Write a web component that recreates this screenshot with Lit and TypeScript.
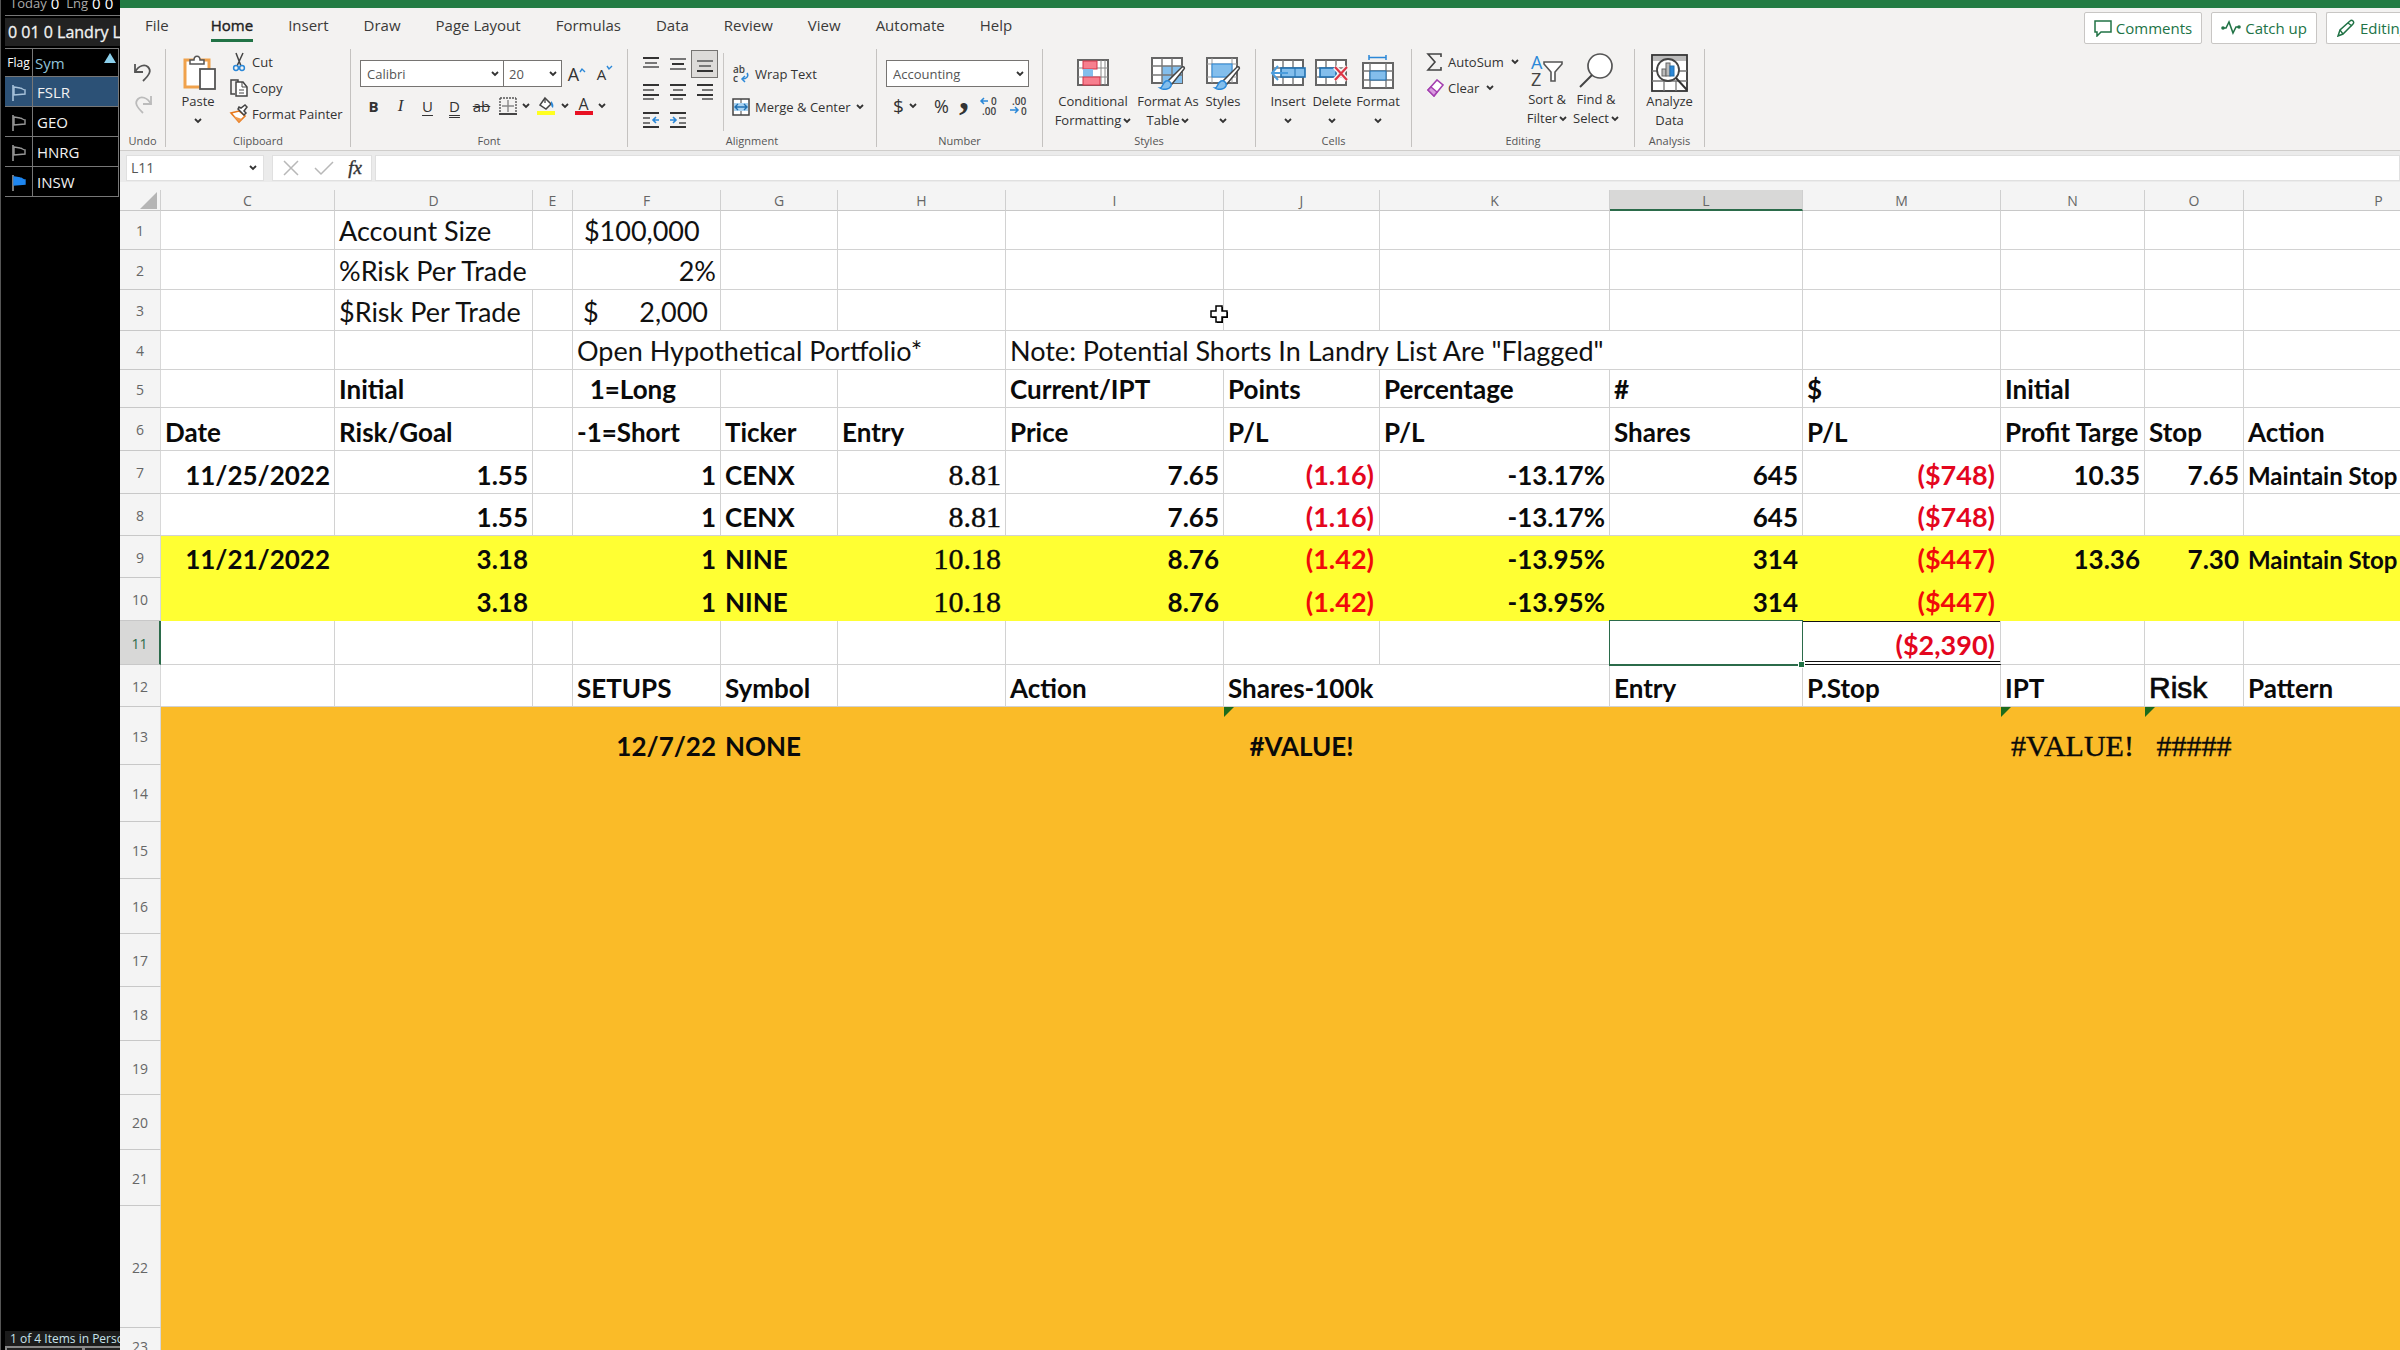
import { LitElement, html, css, svg, nothing } from "lit";
import { customElement } from "lit/decorators.js";
import { classMap } from "lit/directives/class-map.js";

const BLUE = "#2b88d8";
const LIGHT = "#83beec";

const svgIcon = (w: number, h: number, body: unknown) =>
  html`<svg width=${w} height=${h} viewBox="0 0 ${w} ${h}" fill="none" aria-hidden="true">${body}</svg>`;

const chevron = html`<svg class="chev" width="8" height="6" viewBox="0 0 8 6" fill="none" aria-hidden="true"><path d="M1 1l3 3 3-3" stroke="#333" stroke-width="1.8" /></svg>`;

const lines = (list: [number, number, number, string][]) =>
  list.map(([x1, x2, y, c]) => svg`<path d="M${x1} ${y}H${x2}" stroke=${c} stroke-width="2"/>`);

const D = "#333";
const G = "#777";
const gridPath = svg`<rect x="1" y="1" width="30" height="25" fill="#fff" stroke="#666" stroke-width="2"/>`;
const brush = svg`<path d="M31 10c2-1 3 1 2 2L21 27l-4-3z" fill="#fff" stroke="#444" stroke-width="1.5"/><path d="M9 31c3 0 2-5 6-7 3-1 6 2 5 5-2 4-8 4-11 2z" fill="${LIGHT}" stroke="${BLUE}" stroke-width="1.5"/>`;

const icons = {
  undo: svgIcon(20, 20, svg`<path d="M2 1v8h8" stroke="#555" stroke-width="1.8"/><path d="M2 9C6 2 12 1 15 4c4 4 1 8-5 14" stroke="#555" stroke-width="1.8"/>`),
  redo: svgIcon(20, 20, svg`<path d="M18 1v8h-8" stroke="#bbb" stroke-width="1.8"/><path d="M18 9C14 2 8 1 5 4c-4 4-1 8 5 14" stroke="#bbb" stroke-width="1.8"/>`),
  paste: svgIcon(38, 36, svg`<g transform="translate(4 0)"><rect x="2" y="5" width="24" height="27" fill="#fff" stroke="#f0a24c" stroke-width="3"/><path d="M7 9V5h4c0-5 6-5 6 0h4v4z" fill="#fff" stroke="#555" stroke-width="1.5"/><rect x="17" y="14" width="15" height="20" fill="#fff" stroke="#555" stroke-width="1.8"/></g>`),
  cut: svgIcon(18, 20, svg`<path d="M6 1l5 13M13 1L7 14" stroke="#444" stroke-width="1.5"/><circle cx="6" cy="16" r="2.4" stroke="${BLUE}" stroke-width="1.5"/><circle cx="12" cy="16" r="2.4" stroke="${BLUE}" stroke-width="1.5"/>`),
  copy: svgIcon(20, 20, svg`<path d="M6 16H2V2h7v2" stroke="#444" stroke-width="1.5"/><path d="M7 4h7l4 5v9H7z" fill="#fff" stroke="#444" stroke-width="1.5"/><path d="M13 4v5h5M10 12h5M10 15h5" stroke="#444"/>`),
  painter: svgIcon(20, 20, svg`<path d="M2 9l8 9 6-6-6-5z" fill="#fff" stroke="#e8791c" stroke-width="1.6"/><path d="M4 12l6 6 3-3z" fill="#f0994a"/><path d="M9 5l6 6 2-2-2-2 3-4-2-2-4 3-2-1z" fill="#fff" stroke="#444" stroke-width="1.5"/>`),
  bordersIcon: svgIcon(18, 18, svg`<path d="M1 1h16M1 1v16M17 1v16" stroke="#555" stroke-width="1.4" stroke-dasharray="2 1"/><path d="M9 3v12M3 9h12" stroke="#888" stroke-width="1.4"/><path d="M0 17h18" stroke="#444" stroke-width="2"/>`),
  fill: svgIcon(20, 20, svg`<path d="M9 2l6 6-5 5-6-4z" fill="#fff" stroke="#444" stroke-width="1.5"/><path d="M9 2V7" stroke="#444" stroke-width="1.3"/><path d="M15 5c2 2 3 4 2 7-2-1-2-3-2-7z" fill="${BLUE}"/><rect x="1" y="15" width="18" height="4" fill="#ffff20"/>`),
  wrap: svgIcon(18, 18, svg`<text x="1" y="8" class="tiny">ab</text><text x="1" y="17" class="tiny">c</text><path d="M15 8c2 3 0 6-5 6m3-3l-3 3 3 3" stroke="${BLUE}" stroke-width="1.5"/>`),
  merge: svgIcon(18, 18, svg`<rect x="1" y="1" width="16" height="16" fill="#fff" stroke="#444" stroke-width="1.5"/><rect x="2" y="5" width="14" height="8" fill="#a9d3f2"/><path d="M9 1v4M9 13v4" stroke="#444"/><path d="M3 9h12M6 6L3 9l3 3M12 6l3 3-3 3" stroke="#2170b0" stroke-width="1.4"/>`),
  vtop: svgIcon(18, 18, lines([[1, 17, 3, D], [3, 15, 8, G], [1, 17, 12, G]])),
  vmid: svgIcon(18, 18, lines([[1, 17, 4, G], [3, 15, 9, D], [1, 17, 14, G]])),
  vbot: svgIcon(18, 18, lines([[1, 17, 6, G], [3, 15, 11, G], [1, 17, 16, D]])),
  left: svgIcon(18, 18, lines([[1, 17, 2, D], [1, 12, 7, G], [1, 17, 12, D], [1, 12, 16, G]])),
  center: svgIcon(18, 18, lines([[1, 17, 2, D], [4, 14, 7, G], [1, 17, 12, D], [4, 14, 16, G]])),
  right: svgIcon(18, 18, lines([[1, 17, 2, D], [6, 17, 7, G], [1, 17, 12, D], [6, 17, 16, G]])),
  outdent: svgIcon(18, 18, [lines([[1, 17, 2, D], [1, 8, 7, G], [1, 8, 12, G], [1, 17, 16, D]]), svg`<path d="M17 9h-6M14 6l-3 3 3 3" stroke="${BLUE}" stroke-width="1.6"/>`]),
  indent: svgIcon(18, 18, [lines([[1, 17, 2, D], [10, 17, 7, G], [10, 17, 12, G], [1, 17, 16, D]]), svg`<path d="M1 9h6M4 6l3 3-3 3" stroke="${BLUE}" stroke-width="1.6"/>`]),
  decInc: svgIcon(20, 20, svg`<path d="M9 5H2M5 2L2 5l3 3" stroke="${BLUE}" stroke-width="1.5"/><text x="12" y="9" class="tiny">0</text><text x="3" y="19" class="tiny">.00</text>`),
  decDec: svgIcon(20, 20, svg`<path d="M1 14h8M6 11l3 3-3 3" stroke="${BLUE}" stroke-width="1.5"/><text x="3" y="9" class="tiny">.00</text><text x="12" y="19" class="tiny">0</text>`),
  conditional: svgIcon(34, 32, svg`<g transform="translate(1 2)">${gridPath}<path d="M24 1v25M28 1v25M1 9h30M1 18h30" stroke="#888"/><rect x="6" y="2" width="14" height="8" fill="#f77f8e" stroke="#d13448"/><rect x="6" y="10" width="10" height="8" fill="${LIGHT}"/><rect x="6" y="18" width="17" height="8" fill="#f77f8e" stroke="#d13448"/></g>`),
  formatTable: svgIcon(36, 34, svg`<g transform="translate(1 1)">${gridPath}<rect x="11" y="9" width="20" height="17" fill="${LIGHT}"/><path d="M11 1v25M21 1v25M1 9h30M1 18h30" stroke="#777" stroke-width="1.4"/>${brush}</g>`),
  styles: svgIcon(36, 34, svg`<g transform="translate(1 1)">${gridPath}<path d="M6 1v25M1 7h30M1 20h30M26 1v25" stroke="#999"/><rect x="6" y="7" width="20" height="13" fill="${LIGHT}" stroke="${BLUE}"/>${brush}</g>`),
  insert: svgIcon(36, 32, svg`<g transform="translate(2 2)">${gridPath}<path d="M11 1v25M21 1v25M1 9h30M1 18h30" stroke="#777" stroke-width="1.4"/><rect x="9" y="9" width="24" height="9" fill="${LIGHT}" stroke="#2170b0" stroke-width="1.6"/><path d="M23 9v9" stroke="#2170b0"/></g><path d="M18 16H2M8 9l-6 7 6 7" stroke="#4a9cdc" stroke-width="2"/>`),
  del: svgIcon(34, 32, svg`<g transform="translate(0 2)">${gridPath}<path d="M11 1v25M21 1v25M1 9h30M1 18h30" stroke="#777" stroke-width="1.4"/><rect x="5" y="9" width="16" height="9" fill="${LIGHT}" stroke="#2170b0" stroke-width="1.6"/><path d="M20 8l12 13M32 8L20 21" stroke="#f3f2f1" stroke-width="5"/><path d="M20 8l12 13M32 8L20 21" stroke="#dc3545" stroke-width="2.2"/></g>`),
  format: svgIcon(34, 36, svg`<path d="M8 2.5h17M8 0v5M25 0v5" stroke="${BLUE}" stroke-width="1.5"/><g transform="translate(1 7)">${gridPath}<path d="M8 1v25M24 1v25M1 9h30M1 18h30" stroke="#777" stroke-width="1.4"/><rect x="8" y="9" width="16" height="9" fill="${LIGHT}" stroke="#2170b0"/></g>`),
  sum: svgIcon(18, 18, svg`<path d="M15 4V1H2l7 8-7 8h13v-3" stroke="#444" stroke-width="1.6"/>`),
  eraser: svgIcon(18, 18, svg`<path d="M2 11L11 1l6 5-9 11z" fill="#fff" stroke="#a43fb0" stroke-width="1.6"/><path d="M2 11l3-3 6 5-3 4z" fill="#d99be0" stroke="#a43fb0" stroke-width="1.4"/>`),
  sort: svgIcon(34, 34, svg`<text x="1" y="15" class="az" fill="${BLUE}">A</text><text x="1" y="32" class="az" fill="#444">Z</text><path d="M14 8h18v2l-7 8v9h-4v-9l-7-8z" fill="#fff" stroke="#555" stroke-width="1.6"/>`),
  find: svgIcon(34, 36, svg`<circle cx="21" cy="13" r="12" fill="#fff" stroke="#555" stroke-width="1.7"/><path d="M13 22L1 34" stroke="#444" stroke-width="2"/>`),
  analyze: svgIcon(38, 38, svg`<rect x="1" y="1" width="35" height="36" fill="#fff" stroke="#333" stroke-width="1.8"/><rect x="2" y="2" width="33" height="5" fill="#bbb"/><path d="M1 17h35M1 27h35M13 27v10M25 27v10" stroke="#777" stroke-width="1.3"/><circle cx="17" cy="16" r="11" fill="#fff" stroke="#444" stroke-width="1.8"/><rect x="11" y="15" width="4" height="7" fill="#bbb" stroke="#666"/><rect x="15" y="9" width="4" height="13" fill="#bbb" stroke="#666"/><rect x="19" y="12" width="4" height="10" fill="${BLUE}" stroke="#2170b0"/><path d="M25 24l11 12" stroke="#333" stroke-width="2"/>`),
  comment: svgIcon(18, 18, svg`<path d="M1 2h16v11H7l-4 4v-4H1z" stroke="#217346" stroke-width="1.5"/>`),
  pulse: svgIcon(20, 18, svg`<path d="M2 9h3l3-6 4 11 3-6h3" stroke="#217346" stroke-width="1.6"/><circle cx="2" cy="9" r="1.8" fill="#217346"/><circle cx="18" cy="8" r="1.8" fill="#217346"/>`),
  pencil: svgIcon(20, 18, svg`<path d="M2 17l2-6L14 2c2-2 5 1 3 3L7 15z" stroke="#217346" stroke-width="1.5"/><path d="M4 11l3 4M12 4l4 3" stroke="#217346" stroke-width="1.3"/>`),
  cancel: svgIcon(16, 16, svg`<path d="M1 1l14 14M15 1L1 15" stroke="#b8b8b8" stroke-width="1.5"/>`),
  accept: svgIcon(20, 16, svg`<path d="M1 8l6 6L19 2" stroke="#b8b8b8" stroke-width="1.5"/>`),
};

type Cell = {
  t?: string;
  span?: number;
  r?: boolean;
  c?: boolean;
  red?: boolean;
  serif?: boolean;
  arial?: boolean;
  small?: boolean;
  err?: boolean;
  total?: boolean;
  active?: boolean;
  split?: string[];
};
type Row = { h: number; kind?: string; bold?: boolean; cells: Record<string, Cell> };

const COLS: [string, number][] = [
  ["C", 174], ["D", 198], ["E", 40], ["F", 148], ["G", 117], ["H", 168], ["I", 218],
  ["J", 156], ["K", 230], ["L", 193], ["M", 198], ["N", 144], ["O", 99], ["P", 270],
];
const HEAD_WIDTH = 41;
const TOTAL_WIDTH = COLS.reduce((sum, c) => sum + c[1], HEAD_WIDTH);

const position = (
  risk: string, ticker: string, entry: string, price: string, points: string,
  pct: string, shares: string, pl: string,
  extra: Record<string, Cell> = {},
): Record<string, Cell> => ({
  D: { t: risk, r: true }, F: { t: "1", r: true }, G: { t: ticker },
  H: { t: entry, r: true, serif: true }, I: { t: price, r: true },
  J: { t: points, r: true, red: true }, K: { t: pct, r: true },
  L: { t: shares, r: true }, M: { t: pl, r: true, red: true }, ...extra,
});
const cenx = ["1.55", "CENX", "8.81", "7.65", "(1.16)", "-13.17%", "645", "($748)"] as const;
const nine = ["3.18", "NINE", "10.18", "8.76", "(1.42)", "-13.95%", "314", "($447)"] as const;

const ROWS: Row[] = [
  { h: 39, cells: { D: { t: "Account Size" }, F: { t: " $100,000" } } },
  { h: 40, cells: { D: { t: "%Risk Per Trade", span: 2 }, F: { t: "2%", r: true } } },
  { h: 41, cells: { D: { t: "$Risk Per Trade" }, F: { split: ["$", "2,000"] } } },
  { h: 39, cells: { F: { t: "Open Hypothetical Portfolio*", span: 3 }, I: { t: 'Note: Potential Shorts In Landry List Are "Flagged"', span: 4 } } },
  { h: 38, bold: true, cells: { D: { t: "Initial" }, F: { t: "  1=Long" }, I: { t: "Current/IPT" }, J: { t: "Points" }, K: { t: "Percentage" }, L: { t: "#" }, M: { t: "$" }, N: { t: "Initial" } } },
  { h: 43, bold: true, cells: { C: { t: "Date" }, D: { t: "Risk/Goal" }, F: { t: "-1=Short" }, G: { t: "Ticker" }, H: { t: "Entry" }, I: { t: "Price" }, J: { t: "P/L" }, K: { t: "P/L" }, L: { t: "Shares" }, M: { t: "P/L" }, N: { t: "Profit Targe" }, O: { t: "Stop" }, P: { t: "Action" } } },
  { h: 43, bold: true, cells: position(...cenx, { C: { t: "11/25/2022", r: true }, N: { t: "10.35", r: true }, O: { t: "7.65", r: true }, P: { t: "Maintain Stop", small: true } }) },
  { h: 42, bold: true, cells: position(...cenx) },
  { h: 42, bold: true, kind: "yellow", cells: position(...nine, { C: { t: "11/21/2022", r: true }, N: { t: "13.36", r: true }, O: { t: "7.30", r: true }, P: { t: "Maintain Stop", small: true } }) },
  { h: 43, bold: true, kind: "yellow", cells: position(...nine) },
  { h: 44, bold: true, kind: "current", cells: { L: { active: true }, M: { t: "($2,390)", r: true, red: true, total: true } } },
  { h: 42, bold: true, cells: { F: { t: "SETUPS" }, G: { t: "Symbol" }, I: { t: "Action" }, J: { t: "Shares-100k", span: 2 }, L: { t: "Entry" }, M: { t: "P.Stop" }, N: { t: "IPT" }, O: { t: "Risk", arial: true }, P: { t: "Pattern" } } },
  { h: 58, bold: true, kind: "orange", cells: { F: { t: "12/7/22", r: true }, G: { t: "NONE" }, J: { t: "#VALUE!", c: true, err: true }, N: { t: "#VALUE!", c: true, err: true, serif: true }, O: { t: "#####", c: true, err: true, serif: true } } },
  ...[57, 57, 55, 53, 54, 54, 55, 56, 122, 36].map((h) => ({ h, kind: "orange", cells: {} })),
];

const uiFont = css`"Open Sans", "Noto Sans", sans-serif`;

@customElement("watch-list")
class WatchList extends LitElement {
  static styles = css`
    :host { display: flex; flex-direction: column; width: 120px; flex: none; box-sizing: border-box;
      background: #000; color: #f2f2f2; font-family: ${uiFont}; overflow: hidden; padding-left: 4px;
      border-left: 1px solid #555; white-space: nowrap; }
    .totals { display: flex; gap: 4px; height: 15px; border-bottom: 1px solid #777; font-size: 13px; line-height: 7px; padding-left: 5px; color: #aaa; }
    .totals b { color: #fff; font-size: 15px; font-weight: 400; }
    .totals span { padding-left: 3px; }
    .name { height: 28px; line-height: 28px; margin: 2px 0; background: #222; font-size: 16px; padding-left: 3px; -webkit-text-stroke: 0.3px #f2f2f2; }
    table { width: 114px; table-layout: fixed; border-spacing: 0; }
    th, td { box-sizing: border-box; border-right: 1px solid #777; border-bottom: 1px solid #777; padding: 0 0 0 4px; text-align: left; font-weight: 400; }
    th { height: 29px; border-top: 1px solid #777; color: #8fc3d9; font-size: 15px; }
    td { height: 30px; font-size: 15px; }
    th:last-child { padding-left: 2px; }
    .flag { width: 28px; padding: 0; text-align: center; }
    th.flag { color: #fff; font-size: 12px; }
    .on td { background: #2c5176; }
    .sort { display: flex; justify-content: space-between; align-items: flex-start; line-height: 26px; padding-right: 2px; }
    .sort svg { margin-top: 2px; }
    svg { display: inline-block; vertical-align: middle; }
    .status { margin-top: auto; height: 15px; background: #1c1c1c; font-size: 12px; line-height: 15px; padding-left: 5px; color: #c6e2ea; border-bottom: 2px solid #888; overflow: hidden; }
    .panes { height: 2px; flex: none; display: flex; gap: 3px; background: #888; padding-left: 2px; }
    .panes i { flex: 0 0 75px; background: #222; }
  `;
  render() {
    return html`
      <div class="totals">Today <b>0</b> <span>Lng</span> <b>0</b> <b>0</b></div>
      <div class="name">0 01 0 Landry List</div>
      <table>
        <thead><tr>
          <th class="flag">Flag</th>
          <th><span class="sort">Sym <svg width="12" height="12" viewBox="0 0 12 12"><path d="M6 1l6 10H0z" fill="#8cd0ec" /></svg></span></th>
        </tr></thead>
        <tbody>
          ${["FSLR", "GEO", "HNRG", "INSW"].map((sym, i) => html`
            <tr class=${classMap({ on: i === 0 })}>
              <td class="flag"><svg width="16" height="18" viewBox="0 0 16 18" fill="none"><path d="M2 1v16" stroke=${i === 0 ? "#a9c4dc" : "#999"} stroke-width="1.6" /><path d="M3 3l6 1c2 0 3 2 5 2v4l-11 1z" fill=${i === 3 ? "#1e86f0" : "none"} stroke=${i === 3 ? "#1e86f0" : i === 0 ? "#a9c4dc" : "#999"} stroke-width="1.4" /></svg></td>
              <td>${sym}</td>
            </tr>`)}
        </tbody>
      </table>
      <div class="status">1 of 4 Items in Personal</div>
      <div class="panes"><i></i><i></i></div>`;
  }
}

@customElement("ribbon-bar")
class RibbonBar extends LitElement {
  static styles = css`
    :host { display: block; background: #f3f2f1; border-top: 8px solid #237c44; border-bottom: 1px solid #cfcdcb;
      font-family: ${uiFont}; color: #333; white-space: nowrap; }
    button, select { font: inherit; color: inherit; background: none; border: 0; padding: 0; margin: 0; }
    svg { display: block; flex: none; }
    .tabs { display: flex; height: 41px; font-size: 15px; align-items: flex-start; }
    nav { display: flex; gap: 35px; padding-left: 25px; }
    nav a { color: #3b3a39; text-decoration: none; line-height: 31px; padding-top: 2px; height: 34px; box-sizing: border-box; border-bottom: 3px solid transparent; }
    nav a.on { border-color: #217346; color: #222; -webkit-text-stroke: 0.4px #222; }
    nav a:first-child { margin-right: 7px; }
    .actions { display: flex; gap: 9px; margin-left: auto; padding-top: 4px; }
    .actions button { display: flex; align-items: center; gap: 4px; height: 32px; padding: 0 9px; background: #fff;
      border: 1px solid #c8c6c4; border-radius: 2px; color: #217346; }
    .actions button.edge { width: 74px; overflow: hidden; border-right: 0; border-radius: 2px 0 0 2px; padding-right: 0; }
    .groups { display: flex; height: 98px; margin-bottom: 3px; font-size: 13px; }
    section { display: flex; flex-direction: column; box-sizing: border-box; border-right: 1px solid #c4c2c0; flex: none; }
    .body { flex: 1; display: flex; min-height: 0; }
    h2 { margin: 0; font-size: 11px; font-weight: 400; line-height: 12px; text-align: center; color: #555; }
    .undo { width: 46px; } .undo .body { flex-direction: column; align-items: center; gap: 12px; padding-top: 14px; box-sizing: border-box; }
    .clip { width: 185px; } .clip .body { padding-left: 8px; gap: 8px; }
    .font { width: 277px; } .align { width: 249px; } .number { width: 166px; }
    .styles { width: 213px; } .styles .body { padding-left: 10px; }
    .cells { width: 156px; } .cells .body { padding-left: 10px; }
    .edit { width: 223px; } .edit .body { padding-left: 14px; }
    .analysis { width: 70px; }
    .big { display: flex; flex-direction: column; align-items: center; padding-top: 4px; line-height: 19px; }
    .edit .big { padding-top: 2px; }
    .big .pic { height: 39px; display: flex; align-items: center; }
    .big .line { display: flex; align-items: center; gap: 2px; height: 19px; }
    .w40 { width: 40px; } .w44 { width: 44px; } .w48 { width: 48px; } .w50 { width: 50px; } .w70 { width: 70px; } .w80 { width: 80px; }
    .small { display: flex; flex-direction: column; }
    .small button { display: flex; align-items: center; gap: 4px; height: 26px; }
    .small .pic { width: 18px; display: flex; justify-content: center; }
    .small .chev { margin-left: 3px; }
    .edit .small { width: 96px; }
    .stack { display: flex; flex-direction: column; padding: 11px 0 0 9px; gap: 5px; flex: 1; }
    .row { display: flex; align-items: center; height: 27px; }
    .box { position: relative; display: flex; align-items: center; background: #fff; border: 1px solid #767472; height: 27px; box-sizing: border-box; }
    .box + .box { border-left: 0; }
    .box select { appearance: none; width: 100%; height: 100%; padding-left: 6px; color: #555; outline: none; }
    .box .chev { position: absolute; right: 4px; pointer-events: none; }
    .face { width: 144px; } .size { width: 58px; } .format { width: 143px; }
    .size select { padding-left: 5px; }
    .grow { font-size: 18px; width: 30px; display: flex; justify-content: center; align-items: flex-start; line-height: 22px; }
    .grow.less { font-size: 15px; line-height: 26px; width: 26px; }
    .grow svg { margin-top: 4px; }
    .t { width: 27px; font-size: 15px; line-height: 20px; text-align: center; }
    .u { text-decoration: underline; text-underline-offset: 3px; }
    .dd { text-decoration: underline double; text-underline-offset: 3px; }
    .b { font-weight: 700; }
    .i { font-style: italic; font-family: "Liberation Serif", serif; font-size: 17px; }
    .s { text-decoration: line-through; }
    .drop { display: flex; align-items: center; gap: 5px; width: 38px; justify-content: center; line-height: 20px; font-size: 16px; }
    .red { border-bottom: 4px solid #e81123; line-height: 15px; width: 18px; text-align: center; height: 18px; box-sizing: border-box; }
    .grid { display: grid; grid-template-columns: repeat(3, 27px); grid-template-rows: 28px 28px 27px; padding: 1px 0 0 9px; }
    .grid button { display: flex; align-items: center; justify-content: center; border: 1px solid transparent; }
    .grid button.on { background: #dddbd9; border-color: #767472; }
    .rule { width: 1px; background: #c8c6c4; margin: 4px 8px 4px 5px; }
    .rows { display: flex; flex-direction: column; gap: 6px; padding-top: 11px; }
    .rows button { display: flex; align-items: center; gap: 5px; height: 27px; }
    .stack.num .row { justify-content: space-between; padding-right: 13px; font-size: 18px; }
    .num .row:first-child { font-size: 13px; }
    .num .drop { font-size: 19px; }
    .comma { font-family: "Liberation Serif", serif; font-size: 40px; font-weight: 700; line-height: 1px; padding-bottom: 20px; }
    .tiny { font: 600 10px ${uiFont}; fill: #444; }
    .az { font: 400 18px ${uiFont}; }
  `;
  private big(cls: string, icon: unknown, a: string, b = "", drop = true) {
    return html`<button class="big ${cls}"><span class="pic">${icon}</span><span class="line">${a}</span><span class="line">${b}${drop ? chevron : nothing}</span></button>`;
  }
  private small(icon: unknown, label: string, drop = false) {
    return html`<button><span class="pic">${icon}</span>${label}${drop ? chevron : nothing}</button>`;
  }
  render() {
    const tabs = ["File", "Home", "Insert", "Draw", "Page Layout", "Formulas", "Data", "Review", "View", "Automate", "Help"];
    const grid: [string, unknown][] = [
      ["Top align", icons.vtop], ["Middle align", icons.vmid], ["Bottom align", icons.vbot],
      ["Align left", icons.left], ["Center", icons.center], ["Align right", icons.right],
      ["Decrease indent", icons.outdent], ["Increase indent", icons.indent],
    ];
    return html`
      <div class="tabs">
        <nav>${tabs.map((t) => html`<a href="#" class=${classMap({ on: t === "Home" })}>${t}</a>`)}</nav>
        <div class="actions">
          <button>${icons.comment} Comments</button>
          <button>${icons.pulse} Catch up</button>
          <button class="edge">${icons.pencil} Editing</button>
        </div>
      </div>
      <div class="groups">
        <section class="undo"><div class="body"><button aria-label="Undo">${icons.undo}</button><button aria-label="Redo">${icons.redo}</button></div><h2>Undo</h2></section>
        <section class="clip"><div class="body">
          ${this.big("w48", icons.paste, "Paste")}
          <div class="small">${this.small(icons.cut, "Cut")}${this.small(icons.copy, "Copy")}${this.small(icons.painter, "Format Painter")}</div>
        </div><h2>Clipboard</h2></section>
        <section class="font"><div class="body"><div class="stack">
          <div class="row">
            <label class="box face"><select aria-label="Font"><option>Calibri</option></select>${chevron}</label>
            <label class="box size"><select aria-label="Font size"><option>20</option></select>${chevron}</label>
            <button class="grow" aria-label="Increase font size">A<svg width="7" height="6" viewBox="0 0 7 6" fill="none"><path d="M1 5l2-3 3 3" stroke=${BLUE} stroke-width="1.4" /></svg></button>
            <button class="grow less" aria-label="Decrease font size">A<svg width="7" height="6" viewBox="0 0 7 6" fill="none"><path d="M1 1l2 3 3-3" stroke=${BLUE} stroke-width="1.4" /></svg></button>
          </div>
          <div class="row">
            <button class="t b">B</button><button class="t i">I</button><button class="t u">U</button><button class="t dd">D</button><button class="t s">ab</button>
            <button class="drop" aria-label="Borders">${icons.bordersIcon}${chevron}</button>
            <button class="drop" aria-label="Fill color">${icons.fill}${chevron}</button>
            <button class="drop" aria-label="Font color"><span class="red">A</span>${chevron}</button>
          </div>
        </div></div><h2>Font</h2></section>
        <section class="align"><div class="body">
          <div class="grid">${grid.map(([label, icon], i) => html`<button aria-label=${label} class=${classMap({ on: i === 2 })}>${icon}</button>`)}</div>
          <div class="rule"></div>
          <div class="rows"><button>${icons.wrap} Wrap Text</button><button>${icons.merge} Merge &amp; Center ${chevron}</button></div>
        </div><h2>Alignment</h2></section>
        <section class="number"><div class="body"><div class="stack num">
          <div class="row"><label class="box format"><select aria-label="Number format"><option>Accounting</option></select>${chevron}</label></div>
          <div class="row">
            <button class="drop">$${chevron}</button><button>%</button><button class="comma">,</button>
            <button aria-label="Increase decimal">${icons.decInc}</button><button aria-label="Decrease decimal">${icons.decDec}</button>
          </div>
        </div></div><h2>Number</h2></section>
        <section class="styles"><div class="body">
          ${this.big("w80", icons.conditional, "Conditional", "Formatting")}${this.big("w70", icons.formatTable, "Format As", "Table")}${this.big("w40", icons.styles, "Styles")}
        </div><h2>Styles</h2></section>
        <section class="cells"><div class="body">
          ${this.big("w44", icons.insert, "Insert")}${this.big("w44", icons.del, "Delete")}${this.big("w48", icons.format, "Format")}
        </div><h2>Cells</h2></section>
        <section class="edit"><div class="body">
          <div class="small">${this.small(icons.sum, "AutoSum", true)}${this.small(icons.eraser, "Clear", true)}</div>
          ${this.big("w50", icons.sort, "Sort &", "Filter")}${this.big("w48", icons.find, "Find &", "Select")}
        </div><h2>Editing</h2></section>
        <section class="analysis"><div class="body">${this.big("w70", icons.analyze, "Analyze", "Data", false)}</div><h2>Analysis</h2></section>
      </div>`;
  }
}

@customElement("formula-bar")
class FormulaBar extends LitElement {
  static styles = css`
    :host { display: flex; background: #ebebeb; padding: 4px 0 1px 6px; font-family: ${uiFont}; }
    .name, .tools, .entry { display: flex; align-items: center; height: 26px; box-sizing: border-box; background: #fff; border: 1px solid #e0e0e0; }
    .name { width: 138px; margin-right: 8px; padding-right: 6px; }
    .tools { width: 100px; margin-right: 3px; justify-content: space-between; padding: 0 9px 0 10px; }
    .entry { flex: 1; }
    input { font: 14px/18px ${uiFont}; color: #555; border: 0; outline: 0; background: none; padding: 0 0 0 4px; min-width: 0; flex: 1; }
    button { border: 0; background: none; padding: 0; }
    svg { display: block; }
    .fx { font: italic 400 19px "Liberation Serif", serif; color: #333; line-height: 18px; -webkit-text-stroke: 0.4px #333; }
  `;
  render() {
    return html`
      <div class="name"><input aria-label="Name box" value="L11" /><button aria-label="Names">${chevron}</button></div>
      <div class="tools"><button aria-label="Cancel">${icons.cancel}</button><button aria-label="Enter">${icons.accept}</button><button class="fx">fx</button></div>
      <div class="entry"><input aria-label="Formula" /></div>`;
  }
}

@customElement("sheet-grid")
class SheetGrid extends LitElement {
  static styles = css`
    :host { display: block; position: relative; flex: 1; min-height: 0; overflow: hidden; background: #f4f4f4; padding-top: 8px; }
    table { table-layout: fixed; border-spacing: 0; background: #fff; }
    th, td { box-sizing: border-box; padding: 0; border-right: 1px solid #d2d2d2; border-bottom: 1px solid #d2d2d2; }
    th { background: #f4f4f4; font: 400 14px ${uiFont}; line-height: 16px; color: #666; vertical-align: middle; }
    thead th { height: 21px; border-right-color: #cfcfcf; border-bottom-color: #c8c8c8; padding-top: 2px; }
    thead th.sel { background: #d8d8d7; border-bottom: 2px solid #2b6b4a; }
    thead th.corner { padding: 0; }
    .corner svg { display: block; margin: 1px 3px 0 auto; }
    tbody th { padding-top: 2px; border-right-color: #d8d8d8; border-bottom-color: #c8c8c8; }
    td { position: relative; font: 400 27px/32px Lato, "Open Sans", sans-serif; color: #111; vertical-align: bottom;
      padding: 0 4px 2px 4px; white-space: pre; overflow: hidden; }
    .bold td { font-weight: 700; font-size: 26px; color: #0a0a0a; }
    td.r { text-align: right; }
    td.c { text-align: center; }
    .bold td.red { color: #e4061e; font-size: 27px; padding-right: 5px; }
    .bold td.serif { font-family: "Liberation Serif", serif; font-size: 30px; font-weight: 400; -webkit-text-stroke: 0.4px #0a0a0a; }
    .bold td.arial { font-family: "Liberation Sans", sans-serif; font-size: 30px; font-weight: 400; -webkit-text-stroke: 0.7px #0a0a0a; }
    .bold td.small { font-size: 24px; padding-bottom: 1px; }
    .yellow td { background: #ffff33; border-color: #ffff33; }
    .orange td { background: #fabb28; border-color: #fabb28; }
    .bold.yellow td.red { color: #f10a0a; }
    .current th { background: #d8d8d7; color: #2b6b4a; border-right: 2px solid #2b6b4a; }
    td.err::before { content: ""; position: absolute; left: 0; top: 0; border-top: 10px solid #1c6b1c; border-right: 10px solid transparent; }
    td.total { border-bottom: 4px double #111; padding-bottom: 0; box-shadow: inset 0 1px #111; }
    td.active { overflow: visible; }
    td.active::before { content: ""; position: absolute; inset: -1px -1px -2px -1px; border: 1px solid #2b6b4a; border-bottom-width: 2px; z-index: 1; }
    td.active::after { content: ""; position: absolute; right: -3px; bottom: -4px; width: 5px; height: 5px; background: #217346; border: 1px solid #fff; z-index: 2; }
    .split { display: flex; justify-content: space-between; padding: 0 8px 0 6px; }
    .cursor { position: absolute; left: 1089px; top: 122px; z-index: 3; }
  `;
  private cell(c: Cell | undefined) {
    if (!c) return html`<td></td>`;
    return html`<td colspan=${c.span ?? 1} class=${classMap({
      r: !!c.r, c: !!c.c, red: !!c.red, serif: !!c.serif, arial: !!c.arial, small: !!c.small,
      err: !!c.err, total: !!c.total, active: !!c.active,
    })}>${c.split ? html`<span class="split"><span>${c.split[0]}</span><span>${c.split[1]}</span></span>` : c.t ?? ""}</td>`;
  }
  private row(row: Row, index: number) {
    const out: unknown[] = [];
    for (let i = 0; i < COLS.length; i++) {
      const c = row.cells[COLS[i][0]];
      out.push(this.cell(c));
      if (c?.span) i += c.span - 1;
    }
    return html`<tr class="${row.kind ?? ""} ${row.bold ? "bold" : ""}" style="height:${row.h}px"><th scope="row">${index + 1}</th>${out}</tr>`;
  }
  render() {
    return html`
      <table style="width:${TOTAL_WIDTH}px">
        <colgroup><col style="width:${HEAD_WIDTH}px" />${COLS.map(([, w]) => html`<col style="width:${w}px" />`)}</colgroup>
        <thead><tr>
          <th class="corner" aria-label="Select all"><svg width="17" height="17" viewBox="0 0 17 17"><path d="M17 0v17H0z" fill="#b5b5b5" /></svg></th>
          ${COLS.map(([name]) => html`<th scope="col" class=${classMap({ sel: name === "L" })}>${name}</th>`)}
        </tr></thead>
        <tbody>${ROWS.map((r, i) => this.row(r, i))}</tbody>
      </table>
      <svg class="cursor" width="22" height="21" viewBox="0 0 22 21"><path d="M8 3h6v5h5v6h-5v5H8v-5H3V8h5z" fill="#000" /><path d="M7 2h6v5h5v6h-5v5H7v-5H2V7h5z" fill="#fff" stroke="#000" stroke-width="1.5" /></svg>`;
  }
}

@customElement("app-root")
class AppRoot extends LitElement {
  static styles = css`
    :host { display: flex; height: 100vh; overflow: hidden; background: #000; }
    main { flex: 1; min-width: 0; display: flex; flex-direction: column; overflow: hidden; }
  `;
  render() {
    return html`<watch-list></watch-list><main><ribbon-bar></ribbon-bar><formula-bar></formula-bar><sheet-grid></sheet-grid></main>`;
  }
}
